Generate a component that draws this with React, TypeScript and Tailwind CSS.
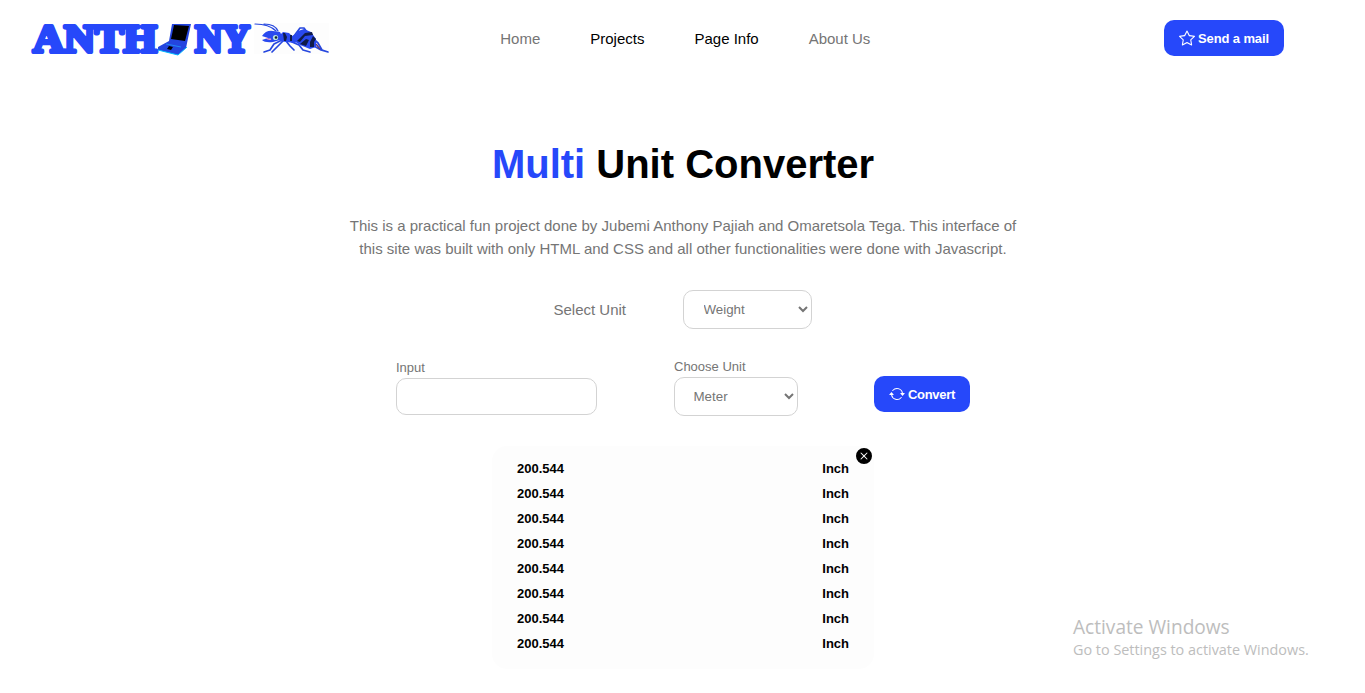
import { BsArrowRepeat, BsStar, BsXCircleFill } from "react-icons/bs";

const results = Array.from({ length: 8 }, () => ({ value: "200.544", unit: "Inch" }));

function Logo() {
  return (
    <svg width="300" height="64" viewBox="0 -13 300 64" role="img" aria-label="Anthony">
      <g fill="#2648fa" stroke="#2648fa" strokeWidth="4.2" strokeLinejoin="round" fontFamily="Liberation Serif, serif" fontWeight="700" fontSize="41">
        <text x="3" y="33.2" textLength="124" lengthAdjust="spacingAndGlyphs">ANTH</text>
        <text x="165" y="33.2" textLength="55" lengthAdjust="spacingAndGlyphs">NY</text>
      </g>
      <path d="M142 5 L161 5 L156 29 L148 36 L128 31 L128 28 L139 22 Z" fill="#2445df" />
      <path d="M144 6 L159 7 L155 22 L141 20 Z" fill="#000" />
      <path d="M128 31 L148 36 L157 28" fill="none" stroke="#0bf" strokeWidth="1" />
      <path d="M136 25 L151 28" stroke="#2187f5" strokeWidth="1.2" />
      <path d="M139 27 L143 28 L141 31 L137 30 Z" fill="#000" />
      <rect x="224" y="4" width="75" height="31" fill="#fdfdfd" />
      <g fill="none" stroke="#2748df" strokeWidth="1.7" strokeLinecap="round" strokeLinejoin="round">
        <path d="M246 12 Q239 5 225 5 M248 12 Q245 5 234 5" strokeWidth="1.2" />
        <path d="M252 21 L244 25 L240 31 L234 33 M253 22 L248 27 L242 33 M256 22 L260 27 L264 31 M262 23 L269 26 L273 31 L280 33" />
        <path d="M264 17 L270 9 L274 9 L279 16 L288 24 L292 31 L298 33 M284 27 L291 31 L298 33" />
      </g>
      <g fill="#2949ef">
        <path d="M232 17 Q236 11 243 12 L250 13 L252 17 L250 21 L243 23 Q235 24 232 21 L238 19 Z" />
        <path d="M249 17 L253 13 L259 14 L262 17 L266 15 L270 20 L265 24 L256 23 L250 22 Z" />
        <path d="M264 18 L268 12 L274 10 L281 13 L286 20 L286 28 L280 30 L270 26 L264 22 Z" />
      </g>
      <g fill="#101b49">
        <path d="M267 22 L275 14 L282 13 L283 16 L275 17 L270 23 Z M270 25 L276 20 L279 21 L276 27 Z M280 28 L280 23 L283 17 L286 20 L284 23 L284 28 Z" />
        <path d="M253 14 H255 L257 18 L256 22 H254 Z M260 16 H262 V22 H260 Z" />
      </g>
      <path d="M286 25 L290 30" stroke="#633b75" strokeWidth="1.5" />
      <circle cx="245.5" cy="18.5" r="2.6" fill="#b9e3df" />
      <circle cx="246" cy="18.5" r="1.3" fill="#14202c" />
      <path d="M236 19 Q239 21 241 20" fill="none" stroke="#ef9bc5" strokeWidth="1.5" />
    </svg>
  );
}

export default function App() {
  return (
    <div className="relative h-[693px] w-full overflow-hidden bg-white font-['Liberation_Sans',Arial,sans-serif] text-[15px] text-[#757575]">
      <header className="flex h-[76px] items-center pl-[30px] pr-[81px]">
        <div className="w-[470px]"><Logo /></div>
        <nav className="flex gap-[50px] whitespace-nowrap pt-[3px] pl-[0.25px]">
          <a>Home</a>
          <a className="text-black">Projects</a>
          <a className="text-black">Page Info</a>
          <a>About Us</a>
        </nav>
        <button className="ml-auto flex h-9 w-[120px] items-center justify-center gap-[3px] rounded-[10px] bg-[#2648fa] text-[13px] font-bold tracking-[-0.12px] text-white">
          <BsStar className="size-4" /><span className="pt-0.5">Send a mail</span>
        </button>
      </header>
      <main className="flex flex-col items-center">
        <h1 className="mt-[64px] pl-px text-[40px] leading-[48px] font-bold text-black"><span className="text-[#2648fa]">Multi</span> Unit Converter</h1>
        <p className="mt-[26px] pl-px text-center leading-[23px] whitespace-nowrap">
          This is a practical fun project done by Jubemi Anthony Pajiah and Omaretsola Tega. This interface of<br />
          this site was built with only HTML and CSS and all other functionalities were done with Javascript.
        </p>
        <div className="mt-[30px] flex w-[259px] items-center justify-between">
          <label className="pt-0.5 pl-[0.5px]">Select Unit</label>
          <select className="h-[39px] w-[129px] rounded-[10px] border border-[#d3d3d3] bg-white pr-px pl-[15.5px] text-[13.333px]">
            <option>Weight</option><option>Length</option>
          </select>
        </div>
        <div className="mt-[29px] flex h-[58px] w-[574px] text-[13px]">
          <div className="flex w-[201px] flex-col pt-px">
            <label className="pb-0.5 pl-[0.5px] leading-[17px]">Input</label>
            <input className="h-[37px] w-full rounded-[10px] border border-[#d3d3d3] bg-white px-4" />
          </div>
          <div className="ml-[77px] flex w-[124px] flex-col">
            <label className="pb-0.5 pl-[0.5px] leading-[17px]">Choose Unit</label>
            <select className="h-[39px] w-full rounded-[10px] border border-[#d3d3d3] bg-white pr-px pl-[15px] text-[13.333px]">
              <option>Meter</option><option>Inch</option>
            </select>
          </div>
          <button className="mt-[18px] ml-[76px] flex h-9 w-24 items-center justify-center gap-[3px] rounded-[10px] bg-[#2648fa] pl-px text-[13px] font-bold tracking-[-0.3px] text-white">
            <BsArrowRepeat className="size-4" /><span className="pt-0.5">Convert</span>
          </button>
        </div>
        <section className="relative mt-[30px] w-[382px] rounded-[15px] bg-[#fdfdfd] pt-[10px] pr-[24.5px] pb-[13px] pl-[25.5px] text-[13px] font-bold text-black">
          {results.map((result, index) => (
            <div key={index} className="flex h-[25px] items-center justify-between">
              <span>{result.value}</span><span>{result.unit}</span>
            </div>
          ))}
          <button aria-label="Close" className="absolute top-[2px] right-[2px] size-4 text-black">
            <BsXCircleFill className="size-4" />
          </button>
        </section>
      </main>
      <aside className="absolute top-[614px] left-[1073px] font-['Open_Sans',sans-serif] whitespace-nowrap text-[#bdbdbd]">
        <p className="text-[19.1px] leading-[26px]">Activate Windows</p>
        <p className="text-[14.4px] leading-[20px]">Go to Settings to activate Windows.</p>
      </aside>
    </div>
  );
}
